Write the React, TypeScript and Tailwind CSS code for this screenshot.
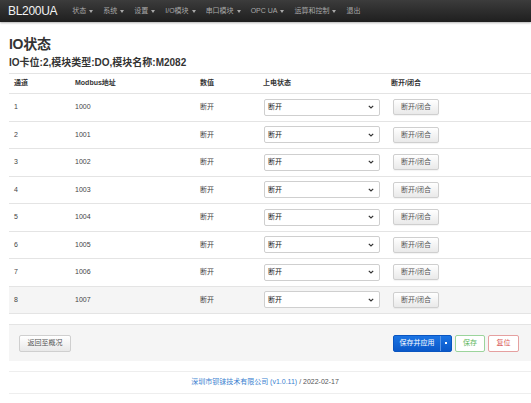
import React from 'react';

const menus = [
  { label: '状态', caret: true },
  { label: '系统', caret: true },
  { label: '设置', caret: true },
  { label: 'I/O模块', caret: true },
  { label: '串口模块', caret: true },
  { label: 'OPC UA', caret: true },
  { label: '运算和控制', caret: true },
  { label: '退出', caret: false },
];

const rows = [0, 1, 2, 3, 4, 5, 6, 7].map((i) => ({
  ch: i + 1,
  addr: 1000 + i,
}));

function Caret({ className = '' }: { className?: string }) {
  return (
    <span
      className={`inline-block w-0 h-0 border-l-[2.5px] border-r-[2.5px] border-t-[3px] border-l-transparent border-r-transparent ${className}`}
    />
  );
}

function Navbar() {
  return (
    <div className="h-[22px] flex items-center bg-gradient-to-b from-[#3c3c3c] to-[#1f1f1f] shadow-[0_1px_2px_rgba(0,0,0,0.3)]">
      <span className="pl-[8px] pr-[15px] text-[12px] text-[#f2f2f2] tracking-[-0.3px]">BL200UA</span>
      <div className="flex items-center gap-[10px] text-[7px] text-[#a8a8a8]">
        {menus.map((m) => (
          <span key={m.label} className="flex items-center gap-[3px]">
            {m.label}
            {m.caret && <Caret className="border-t-[#a8a8a8]" />}
          </span>
        ))}
      </div>
    </div>
  );
}

function StatusTable() {
  return (
    <table className="w-[522px] border-collapse text-[7px] text-[#444]">
      <colgroup>
        <col className="w-[61px]" />
        <col className="w-[125px]" />
        <col className="w-[63px]" />
        <col className="w-[128px]" />
        <col />
      </colgroup>
      <thead>
        <tr className="h-[20px] border-t border-b border-[#e4e4e4] text-left font-bold text-[#333]">
          <th className="pl-[5px] font-bold">通道</th>
          <th className="pl-[5px] font-bold">Modbus地址</th>
          <th className="pl-[5px] font-bold">数值</th>
          <th className="pl-[5px] font-bold">上电状态</th>
          <th className="pl-[5px] font-bold">断开/闭合</th>
        </tr>
      </thead>
      <tbody>
        {rows.map((r) => (
          <tr
            key={r.ch}
            className={`h-[27.5px] border-b border-[#e4e4e4] ${r.ch === 8 ? 'bg-[#f5f5f5]' : ''}`}
          >
            <td className="pl-[5px]">{r.ch}</td>
            <td className="pl-[5px]">{r.addr}</td>
            <td className="pl-[5px]">断开</td>
            <td className="pl-[6px]">
              <div className="w-[116px] h-[17px] flex items-center justify-between px-[3px] bg-white border border-[#cfcfcf] rounded-[2px] text-[7px] text-[#222]">
                <span>断开</span>
                <svg width="6" height="4" viewBox="0 0 6 4" className="mr-[2px]">
                  <path d="M0.8 0.8 L3 3 L5.2 0.8" fill="none" stroke="#333" strokeWidth="1.2" />
                </svg>
              </div>
            </td>
            <td className="pl-[7px]">
              <button className="w-[46px] h-[16px] bg-gradient-to-b from-white to-[#e9e9e9] border border-[#cfcfcf] rounded-[2px] text-[7px] text-[#555] shadow-[0_1px_1px_rgba(0,0,0,0.05)]">
                断开/闭合
              </button>
            </td>
          </tr>
        ))}
      </tbody>
    </table>
  );
}

function ActionBar() {
  return (
    <div className="mt-[10px] h-[37px] w-[522px] flex items-center justify-between pl-[10px] pr-[12px] bg-[#f5f5f5] border-t border-[#e4e4e4] text-[7px]">
      <button className="w-[52px] h-[17px] bg-gradient-to-b from-white to-[#e9e9e9] border border-[#cfcfcf] rounded-[2px] text-[#555]">
        返回至概况
      </button>
      <div className="flex items-center gap-[3px]">
        <div className="flex h-[17px] rounded-[2px] overflow-hidden bg-gradient-to-b from-[#1b74e4] to-[#0a58c9] border border-[#0a55c0] text-white">
          <span className="w-[46px] flex items-center justify-center">保存并应用</span>
          <span className="w-[11px] flex items-center justify-center border-l border-[#5b96e6]">
            <span className="w-[2px] h-[2px] bg-white" />
          </span>
        </div>
        <button className="w-[30px] h-[17px] bg-white border border-[#9cd49c] rounded-[2px] text-[#5cb85c]">保存</button>
        <button className="w-[31px] h-[17px] bg-white border border-[#e5a0a0] rounded-[2px] text-[#d9534f]">复位</button>
      </div>
    </div>
  );
}

export default function App() {
  return (
    <div
      className="w-[531px] h-[403px] overflow-hidden bg-white"
      style={{ fontFamily: '"Liberation Sans", "Noto Sans CJK SC", sans-serif' }}
    >
      <Navbar />
      <div className="pl-[9px]">
        <h1 className="mt-[14px] text-[14px] leading-[16px] font-bold text-[#333] tracking-[-0.3px]">IO状态</h1>
        <h2 className="mt-[5px] text-[10px] leading-[12px] font-bold text-[#333]">
          IO卡位:2,模块类型:DO,模块名称:M2082
        </h2>
        <div className="mt-[4px]">
          <StatusTable />
        </div>
        <ActionBar />
        <div className="mt-[10px] w-[522px] h-[23px] flex items-center justify-center pr-[10px] border-t border-b border-[#eeeeee] text-[7px]">
          <span className="text-[#3a7fd0]">深圳市钡铼技术有限公司 (v1.0.11)</span>
          <span className="text-[#555]">&nbsp;/ 2022-02-17</span>
        </div>
      </div>
    </div>
  );
}
